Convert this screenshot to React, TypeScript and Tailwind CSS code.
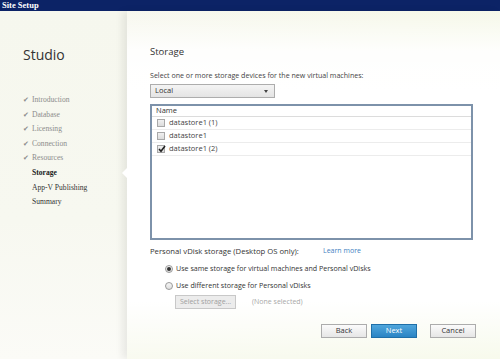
import React from "react";

const serif = { fontFamily: '"Liberation Serif", "Times New Roman", serif' };
const sans = { fontFamily: '"Open Sans", "Noto Sans", sans-serif' };

function Step({ label, done, active }: { label: string; done?: boolean; active?: boolean }) {
  return (
    <div className="flex items-center h-[14.6px] leading-[14.6px]">
      <span className="w-[9px] text-[7px] text-[#8c8c8c]" style={sans}>{done ? "✔" : ""}</span>
      <span
        className={
          "text-[7.6px] " +
          (active ? "text-[#1a1a1a] font-semibold" : done ? "text-[#8c8c8c]" : "text-[#333]")
        }
        style={serif}
      >
        {label}
      </span>
    </div>
  );
}

function Box({ checked }: { checked?: boolean }) {
  return (
    <span className="relative w-[8px] h-[8px] border border-[#a8a8a8] bg-gradient-to-b from-[#f0f0f0] to-[#dcdcdc] flex items-center justify-center">
      {checked && (
        <svg width="8" height="8" viewBox="0 0 8 8" className="absolute left-[0px] top-[-1px]">
          <path d="M1 4 L3 6.2 L7 1" stroke="#222" strokeWidth="1.6" fill="none" />
        </svg>
      )}
    </span>
  );
}

function Row({ label, checked }: { label: string; checked?: boolean }) {
  return (
    <div className="flex items-center h-[13px] border-b border-[#ececec] pl-[5px] gap-[4px]">
      <Box checked={checked} />
      <span className="text-[7.5px] text-[#444]">{label}</span>
    </div>
  );
}

function Radio({ on, label }: { on?: boolean; label: string }) {
  return (
    <div className="flex items-center h-[17px] pl-[15px] gap-[3px]">
      <span className="w-[8px] h-[8px] rounded-full border border-[#9a9a9a] bg-gradient-to-b from-[#f6f6f6] to-[#dedede] flex items-center justify-center">
        {on && <span className="w-[4px] h-[4px] rounded-full bg-[#333]" />}
      </span>
      <span className="text-[7.1px] text-[#333]">{label}</span>
    </div>
  );
}

function Btn({ label, primary }: { label: string; primary?: boolean }) {
  return (
    <div
      className={
        "w-[46px] h-[14px] flex items-center justify-center text-[7.5px] border " +
        (primary
          ? "border-[#1f6fa8] bg-gradient-to-b from-[#4fa6dc] to-[#2a84c4] text-white"
          : "border-[#acacac] bg-gradient-to-b from-[#fbfbfb] to-[#e6e6e6] text-[#333]")
      }
    >
      {label}
    </div>
  );
}

export default function App() {
  return (
    <div
      className="w-[500px] h-[359px] overflow-hidden flex flex-col bg-[linear-gradient(135deg,#f7f7f0_0%,#f6f8ea_50%,#f4f8e4_100%)]"
      style={sans}
    >
      <div
        className="h-[11px] bg-[#0c2366] text-white font-bold text-[8.5px] leading-[11px] pl-[2px] shrink-0"
        style={serif}
      >
        Site Setup
      </div>
      <div className="flex flex-1">
        <aside className="w-[127px] shrink-0 pl-[23px] bg-[linear-gradient(180deg,#f6f7ee_0%,#f7f8f0_60%,#fbfbf7_100%)]">
          <div className="mt-[34px] h-[20px] leading-[20px] text-[14px] text-[#333]" style={sans}>
            Studio
          </div>
          <div className="mt-[28px] flex flex-col">
            <Step label="Introduction" done />
            <Step label="Database" done />
            <Step label="Licensing" done />
            <Step label="Connection" done />
            <Step label="Resources" done />
            <Step label="Storage" active />
            <Step label="App-V Publishing" />
            <Step label="Summary" />
          </div>
        </aside>
        <main className="relative flex-1 pl-[23px] shadow-[-5px_0_7px_rgba(0,0,0,0.07)] bg-[linear-gradient(180deg,rgba(255,255,255,0)_0px,rgba(255,255,255,0.9)_40px,#ffffff_80px,#ffffff_290px,rgba(255,255,255,0.3)_348px)]">
          <div className="absolute left-[-5px] top-[157px] w-0 h-0 border-y-[5px] border-y-transparent border-r-[5px] border-r-white" />
          <div className="mt-[34px] h-[14px] leading-[14px] text-[9.5px] text-[#333]">Storage</div>
          <div className="mt-[9px] h-[14px] leading-[14px] text-[7.1px] text-[#444]">
            Select one or more storage devices for the new virtual machines:
          </div>
          <div className="mt-[2px] w-[125px] h-[14px] border border-[#adadad] bg-gradient-to-b from-[#f4f4f4] to-[#e4e4e4] flex items-center justify-between pl-[4px] pr-[6px]">
            <span className="text-[7.5px] text-[#333]">Local</span>
            <span className="w-0 h-0 border-x-[2.5px] border-x-transparent border-t-[3px] border-t-[#444]" />
          </div>
          <div className="mt-[6px] w-[323px] h-[136px] border-2 border-[#7d92aa] bg-white">
            <div className="h-[11px] flex items-center pl-[4px] border-b border-[#dcdcdc] text-[7.5px] text-[#333]">
              Name
            </div>
            <Row label="datastore1 (1)" />
            <Row label="datastore1" />
            <Row label="datastore1 (2)" checked />
          </div>
          <div className="mt-[3px] h-[17px] flex items-center">
            <span className="text-[7.7px] text-[#333] w-[173px]">Personal vDisk storage (Desktop OS only):</span>
            <span className="text-[7px] text-[#3f7fbf]">Learn more</span>
          </div>
          <Radio on label="Use same storage for virtual machines and Personal vDisks" />
          <Radio label="Use different storage for Personal vDisks" />
          <div className="mt-[1px] flex items-center pl-[25px]">
            <div className="w-[61px] h-[14px] border border-[#c8c8c8] bg-[#ececec] text-[7px] text-[#a0a0a0] flex items-center justify-center">
              Select storage...
            </div>
            <span className="ml-[16px] text-[7px] text-[#a8a8a8]">(None selected)</span>
          </div>
          <div className="mt-[15px] flex items-center pl-[171px]">
            <Btn label="Back" />
            <div className="w-[4px]" />
            <Btn label="Next" primary />
            <div className="w-[13px]" />
            <Btn label="Cancel" />
          </div>
        </main>
      </div>
    </div>
  );
}
